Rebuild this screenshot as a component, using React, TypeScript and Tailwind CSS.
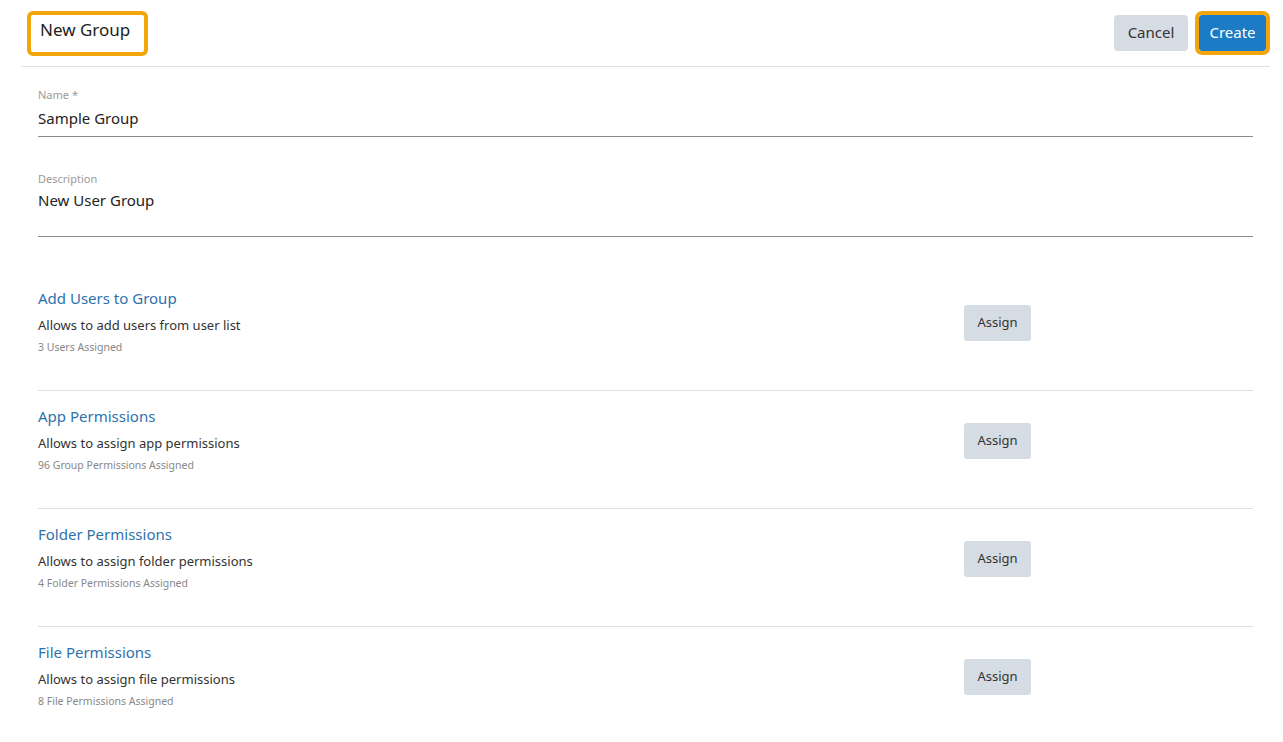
import React from "react";

const sections = [
  { title: "Add Users to Group", desc: "Allows to add users from user list", sub: "3 Users Assigned" },
  { title: "App Permissions", desc: "Allows to assign app permissions", sub: "96 Group Permissions Assigned" },
  { title: "Folder Permissions", desc: "Allows to assign folder permissions", sub: "4 Folder Permissions Assigned" },
  { title: "File Permissions", desc: "Allows to assign file permissions", sub: "8 File Permissions Assigned" },
];

export default function App() {
  return (
    <div className="w-[1283px] h-[742px] bg-white text-[#222] overflow-hidden" style={{ fontFamily: '"Noto Sans", sans-serif' }}>
      <div className="ml-[21px] mr-[13px] h-[67px] border-b border-[#e0e0e0] flex items-start justify-between">
        <div className="mt-[11px] ml-[6px] h-[45px] w-[121px] border-4 border-[#f2a60c] rounded-[6px] pl-[9px] pt-[3px] text-[17px] leading-[24px] text-[#222]">
          New Group
        </div>
        <div className="flex items-start mt-[15px] gap-[11px] mr-[4px]">
          <button className="h-[36px] w-[74px] rounded-[4px] bg-[#d6dce4] text-[15px] leading-[20px] pb-[2px] text-[#333]">Cancel</button>
          <button className="h-[36px] w-[67px] bg-[#1b7bc4] text-[15px] leading-[20px] pb-[2px] text-white outline-4 outline-[#f2a60c] rounded-[3px]">Create</button>
        </div>
      </div>

      <div className="pl-[38px] pr-[30px]">
        <div className="pt-[21px]">
          <div className="text-[11px] leading-[14px] text-[#9a9a9a]">Name *</div>
          <div className="text-[15px] leading-[20px] mt-[6px] text-[#222]">Sample Group</div>
          <div className="mt-[8px] border-b border-[#8a8a8a]"></div>
        </div>
        <div className="pt-[35px]">
          <div className="text-[11px] leading-[14px] text-[#9a9a9a]">Description</div>
          <div className="text-[15px] leading-[20px] mt-[4px] text-[#222]">New User Group</div>
          <div className="mt-[26px] border-b border-[#8a8a8a]"></div>
        </div>

        <div className="mt-[36px]">
          {sections.map((s, i) => (
            <div
              key={s.title}
              className={`grid grid-cols-[926px_auto] items-start pt-[15px] pb-[36px] ${i < sections.length - 1 ? "border-b border-[#dedede]" : ""}`}
            >
              <div>
                <div className="text-[15px] leading-[20px] text-[#2e72ad]">{s.title}</div>
                <div className="mt-[8px] text-[13px] leading-[18px] text-[#333]">{s.desc}</div>
                <div className="mt-[6px] text-[10.5px] leading-[14px] text-[#888]">{s.sub}</div>
              </div>
              <div className="pt-[17px]">
                <button className="h-[36px] w-[67px] rounded-[3px] bg-[#d6dce4] text-[13px] text-[#333]">Assign</button>
              </div>
            </div>
          ))}
        </div>
      </div>
    </div>
  );
}
